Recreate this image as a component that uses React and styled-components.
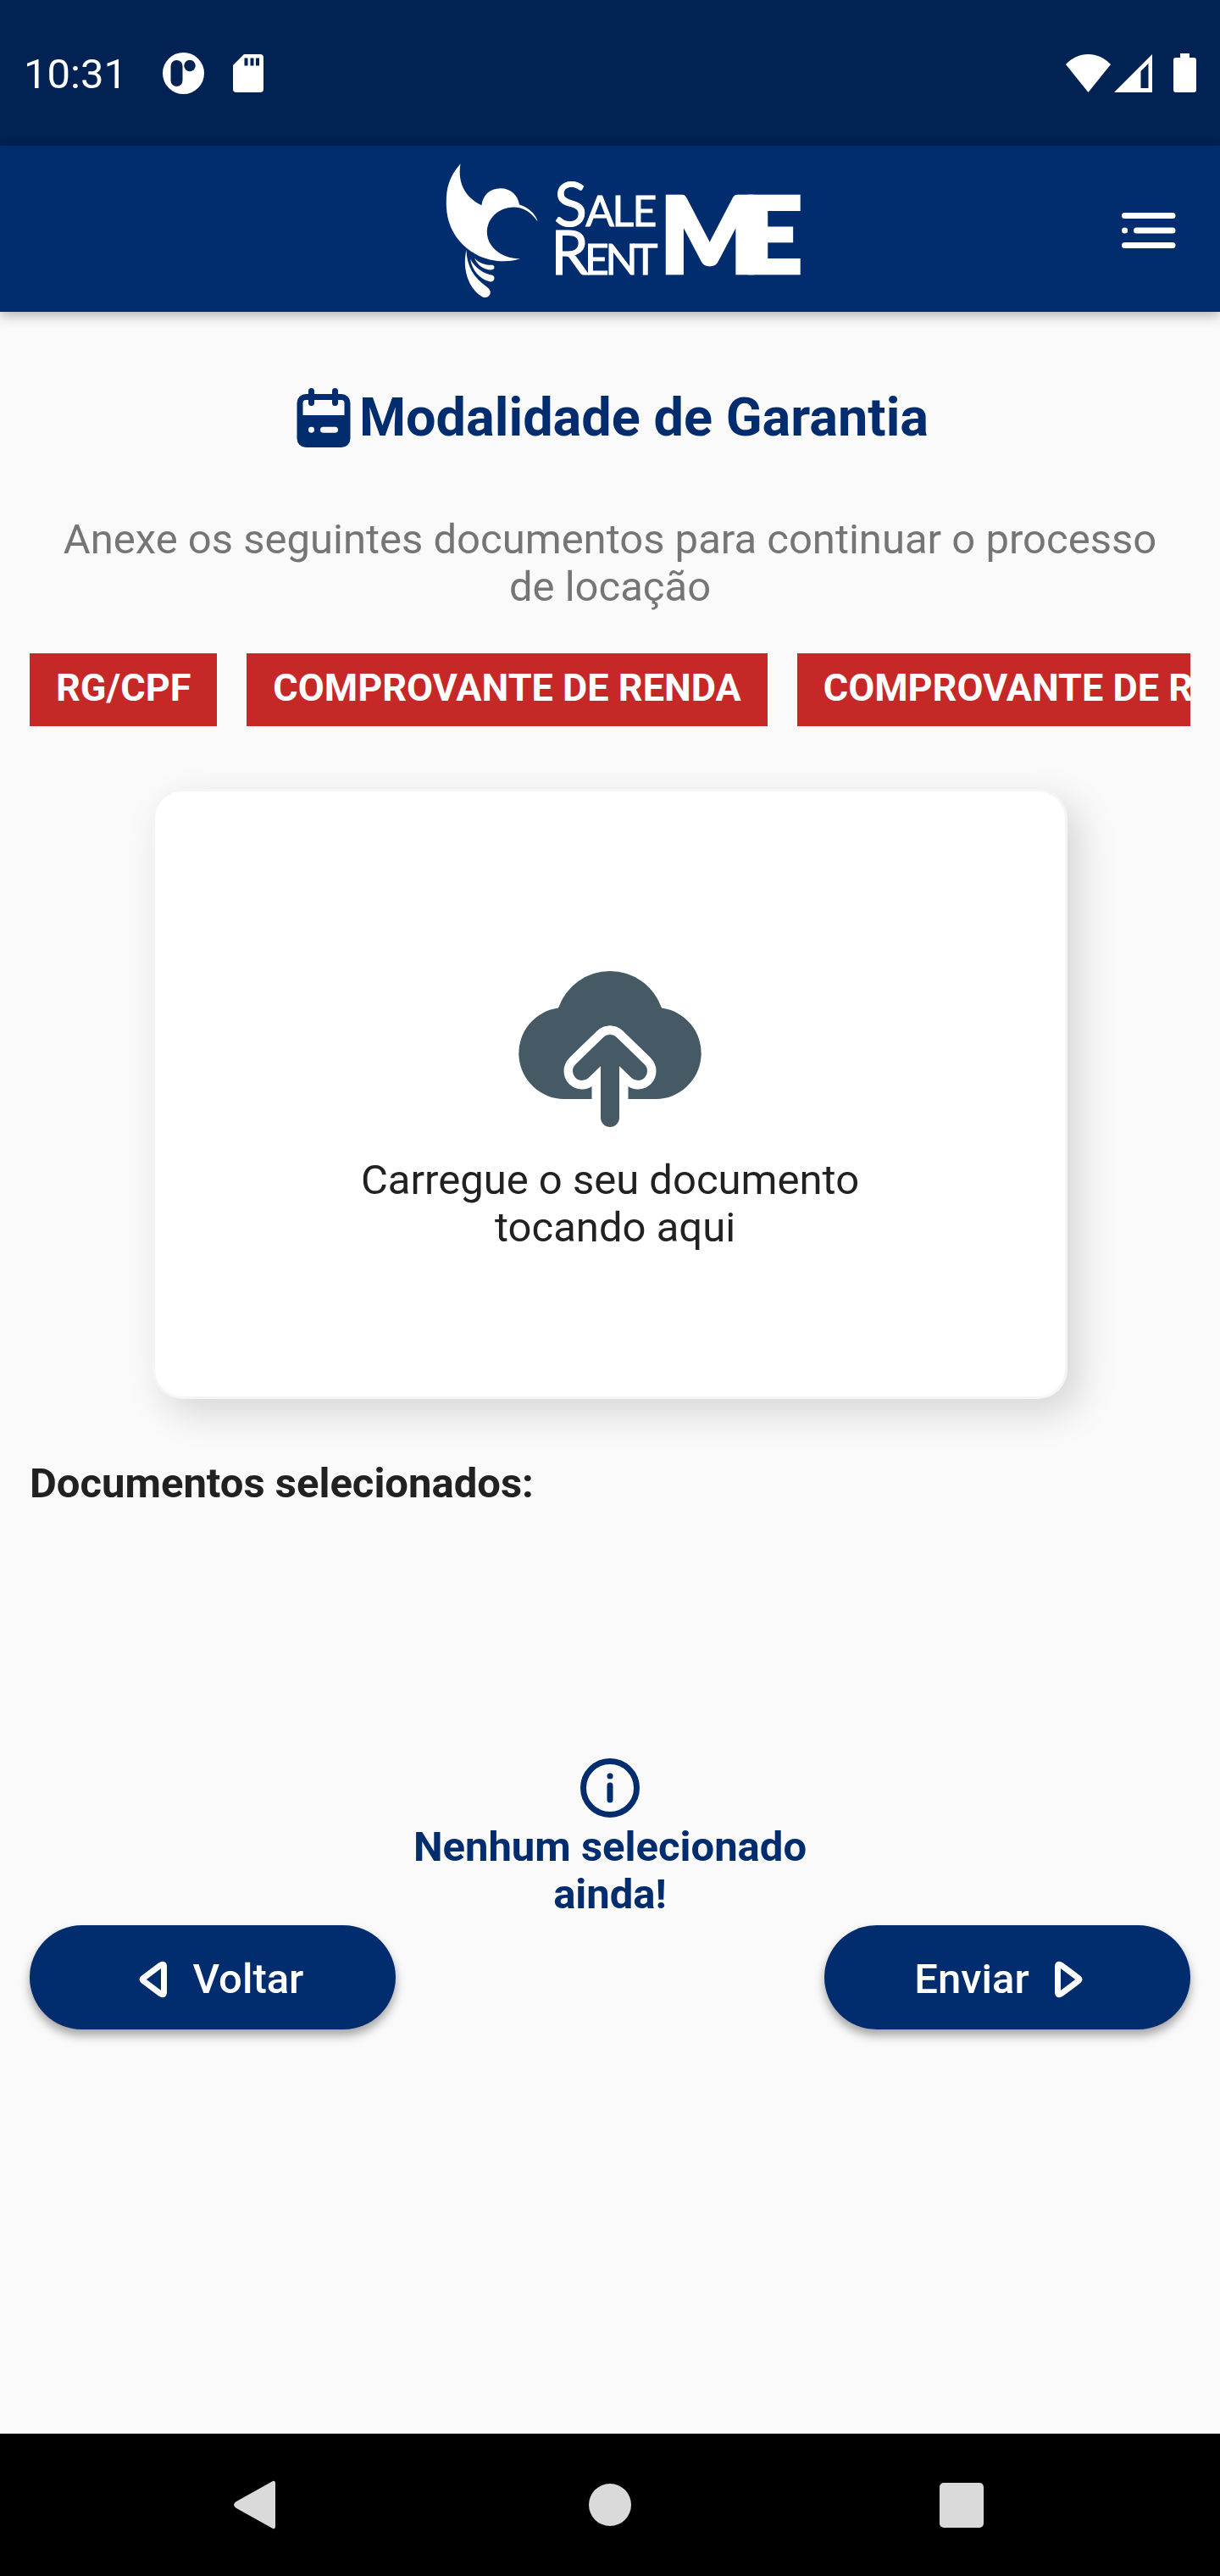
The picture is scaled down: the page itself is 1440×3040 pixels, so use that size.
import React from "react";
import styled, { createGlobalStyle } from "styled-components";

const navy = "#012d6f";

const GlobalStyle = createGlobalStyle`
  * { box-sizing: border-box; }
  body { margin: 0; background: #fafafa; }
  button { font: inherit; border: 0; padding: 0; background: none; cursor: pointer; }
  svg { display: block; flex: none; }
`;

const Screen = styled.div`
  display: flex;
  flex-direction: column;
  min-height: 100vh;
  font-family: Roboto, "Liberation Sans", sans-serif;
  font-size: 49px;
  line-height: 56px;
  color: #212121;
`;

const StatusBar = styled.div`
  display: flex;
  align-items: center;
  justify-content: space-between;
  height: 172px;
  padding: 0 28px;
  background: #012252;
  color: #fff;
`;

const StatusGroup = styled.div`
  display: flex;
  align-items: center;
  gap: ${(p) => p.$gap}px;
`;

const Clock = styled.time`
  margin-right: 8px;
  padding-top: 4px;
`;

const Header = styled.header`
  display: grid;
  grid-template-columns: 84px 1fr 84px;
  align-items: center;
  justify-items: center;
  height: 196px;
  padding: 0 42px;
  background: ${navy};
  box-shadow: 0 4px 14px rgba(0, 0, 0, 0.3);
`;

const MenuButton = styled.button`
  grid-column: 3;
`;

const Logo = styled.svg`
  grid-column: 2;
  fill: #fff;
  font-family: Lato, sans-serif;
`;

const Main = styled.main`
  flex: 1;
  display: flex;
  flex-direction: column;
  padding: 86px 35px;
`;

const Title = styled.h1`
  display: flex;
  align-items: center;
  justify-content: center;
  margin: 0;
  font-size: 63px;
  line-height: 77px;
  font-weight: 700;
  color: ${navy};
`;

const Intro = styled.p`
  margin: 78px 35px 50px;
  text-align: center;
  color: #757575;
`;

const Chips = styled.ul`
  display: flex;
  gap: 35px;
  margin: 0;
  padding: 0;
  list-style: none;
  overflow-x: auto;
  scrollbar-width: none;
`;

const Chip = styled.li`
  flex: none;
  padding: 13px 31px 17px;
  background: #c62828;
  color: #fff;
  font-size: 45px;
  font-weight: 700;
  white-space: nowrap;
`;

const UploadCard = styled.button`
  display: flex;
  flex-direction: column;
  align-items: center;
  justify-content: center;
  gap: 35px;
  height: 720px;
  margin: 74px 145px 72px;
  padding-top: 40px;
  background: #fff;
  border: 3px solid #f5f5f5;
  border-radius: 35px;
  box-shadow: 14px 16px 45px rgba(0, 0, 0, 0.15);
  color: inherit;
  white-space: pre-wrap;
`;

const SectionTitle = styled.h2`
  margin: 0;
  font-size: 49px;
  line-height: 56px;
  font-weight: 700;
`;

const EmptyState = styled.div`
  display: flex;
  flex-direction: column;
  align-items: center;
  align-self: center;
  max-width: 504px;
  margin-top: 289px;
  text-align: center;
  font-weight: 700;
  color: ${navy};
`;

const Actions = styled.div`
  display: flex;
  justify-content: space-between;
  margin-top: 8px;
`;

const ActionButton = styled.button`
  display: flex;
  align-items: center;
  justify-content: center;
  gap: 28px;
  width: 432px;
  height: 123px;
  padding-top: 4px;
  border-radius: 62px;
  background: ${navy};
  color: #fff;
  font-weight: 500;
  box-shadow: 0 7px 12px rgba(0, 0, 0, 0.35);
`;

const SystemNav = styled.nav`
  display: flex;
  align-items: center;
  justify-content: space-between;
  height: 168px;
  padding: 0 259px;
  background: #000;
`;

const Glyph = ({ w, h, children, ...rest }) => (
  <svg width={w} height={h} viewBox={`0 0 ${w} ${h}`} aria-hidden="true" {...rest}>
    {children}
  </svg>
);

const BrandLogo = () => (
  <Logo width="453" height="163" viewBox="-20 55 1360 490" role="img" aria-label="Sale Rent Me">
    <path d="M128 68C82 120 76 165 78 222C82 300 125 358 185 390C235 417 300 420 340 404C320 406 292 400 272 388C240 368 222 342 222 308C224 256 268 222 318 222C352 222 378 240 402 273C394 244 366 222 337 213C331 178 305 155 270 155C232 155 207 180 203 215C148 190 116 138 128 68Z" />
    <path d="M178 402C195 422 220 428 241 427Q249 429 248 437Q246 444 236 444C208 444 186 424 178 402Z" />
    <path d="M163 406C180 438 210 458 240 463Q249 466 248 475Q246 487 232 486C196 478 168 444 163 406Z" />
    <path d="M149 374C150 430 174 472 222 505Q237 515 233 530Q226 546 208 541C160 516 132 446 149 374Z" />
    <g stroke="#fff" strokeWidth="3" fontSize="150">
      <text x="460 572 666 738" y="289"><tspan fontSize="216">S</tspan>ALE</text>
      <text x="448 568 642 740" y="460"><tspan fontSize="216">R</tspan>ENT</text>
    </g>
    <text x="835 1127" y="454" fontSize="372" fontWeight="900" stroke="#fff" strokeWidth="14">ME</text>
  </Logo>
);

const documents = ["RG/CPF", "COMPROVANTE DE RENDA", "COMPROVANTE DE RESIDÊNCIA"];

export default function App() {
  return (
    <Screen>
      <GlobalStyle />
      <StatusBar>
        <StatusGroup $gap={34}>
          <Clock>10:31</Clock>
          <Glyph w={49} h={49}>
            <circle cx="24.5" cy="24.5" r="24.5" fill="#fff" />
            <rect x="9.500" y="9" width="14" height="31" rx="7" fill="#012252" />
            <circle cx="32" cy="15.500" r="6.700" fill="#012252" />
          </Glyph>
          <Glyph w={36} h={45}>
            <path d="M13 0H32Q36 0 36 4V41Q36 45 32 45H4Q0 45 0 41V13Z" fill="#fff" />
            <path d="M13.500 4.500h4v9h-4zM20.500 4.500h4v9h-4zM27 4.500h4v9h-4z" fill="#012252" />
          </Glyph>
        </StatusGroup>
        <StatusGroup $gap={4}>
          <Glyph w={53} h={45}>
            <path d="M0 12C15-4 38-4 53 12L26.500 45Z" fill="#fff" />
          </Glyph>
          <Glyph w={66} h={45}>
            <path d="M45 0V45H0ZM40.500 11L31.500 20V40H40.500Z" fill="#fff" fillRule="evenodd" />
          </Glyph>
          <Glyph w={27} h={46}>
            <path d="M8 0H19V5H24Q27 5 27 8V43Q27 46 24 46H3Q0 46 0 43V8Q0 5 3 5H8Z" fill="#fff" />
          </Glyph>
        </StatusGroup>
      </StatusBar>

      <Header>
        <BrandLogo />
        <MenuButton aria-label="Menu">
          <Glyph w={84} h={84} stroke="#fff" strokeWidth="7" strokeLinecap="round">
            <path d="M13.500 26.500H70M13.500 44h.1M27.500 44H70M13.500 61.500H70" />
          </Glyph>
        </MenuButton>
      </Header>

      <Main>
        <Title>
          <Glyph w={80} h={77} viewBox="-3 0 80 77">
            <path
              fill={navy}
              fillRule="evenodd"
              d="M20.500 4a3.500 3.500 0 0 1 3.500 3.500V11H45V7.500a3.500 3.500 0 0 1 7 0V11H56A10.500 10.500 0 0 1 66.500 21.500V63.500A10.500 10.500 0 0 1 56 74H14A10.500 10.500 0 0 1 3.500 63.500V21.500A10.500 10.500 0 0 1 14 11H17V7.500A3.500 3.500 0 0 1 20.500 4ZM17 18H14A3.500 3.500 0 0 0 10.500 21.500V36H59.500V21.500A3.500 3.500 0 0 0 56 18H52V21.500a3.500 3.500 0 0 1-7 0V18H24V21.500a3.500 3.500 0 0 1-7 0ZM20.500 49.700a3.500 3.500 0 1 0 .01 7a3.500 3.500 0 1 0-.01-7ZM34.500 49.700a3.500 3.500 0 0 0 0 7H48.500a3.500 3.500 0 0 0 0-7Z"
            />
          </Glyph>
          Modalidade de Garantia
        </Title>

        <Intro>Anexe os seguintes documentos para continuar o processo de locação</Intro>

        <Chips>
          {documents.map((name) => (
            <Chip key={name}>{name}</Chip>
          ))}
        </Chips>

        <UploadCard>
          <Glyph w={216} h={185}>
            <path
              fill="#455a64"
              d="M54 152A54 54 0 0 1 47 44.500A64.500 64.500 0 0 1 169 44.500A54 54 0 0 1 162 152Z"
            />
            <g fill="none" strokeLinecap="round" strokeLinejoin="round">
              <path d="M75 119L108 87L141 119M108 87V190" stroke="#fff" strokeWidth="43" strokeLinecap="butt" />
              <path d="M75 119L108 87L141 119" stroke="#fff" strokeWidth="43" />
              <path d="M75 119L108 87L141 119M108 87V174" stroke="#455a64" strokeWidth="22" />
            </g>
          </Glyph>
          <span>{"Carregue o seu documento\n tocando aqui"}</span>
        </UploadCard>

        <SectionTitle>Documentos selecionados:</SectionTitle>

        <EmptyState>
          <Glyph w={84} h={84} fill="none" stroke={navy} strokeWidth="7" strokeLinecap="round">
            <circle cx="42" cy="42" r="31.500" />
            <path d="M42 39V56M42 28h.1" />
          </Glyph>
          <span>Nenhum selecionado ainda!</span>
        </EmptyState>

        <Actions>
          <ActionButton>
            <Glyph w={56} h={49} fill="none" stroke="#fff" strokeWidth="7" strokeLinejoin="round">
              <path d="M45 8.500Q49.500 5.500 49.500 10V40Q49.500 44.500 45 41.500L25 26.500Q23 25 25 23.500Z" />
            </Glyph>
            Voltar
          </ActionButton>
          <ActionButton>
            Enviar
            <Glyph w={56} h={49} fill="none" stroke="#fff" strokeWidth="7" strokeLinejoin="round">
              <path d="M10 8.500Q5.500 5.500 5.500 10V40Q5.500 44.500 10 41.500L30 26.500Q32 25 30 23.500Z" />
            </Glyph>
          </ActionButton>
        </Actions>
      </Main>

      <SystemNav>
        <button aria-label="Voltar">
          <Glyph w={84} h={84} fill="#dadada">
            <path d="M63 14Q66 13 66 17V67Q66 71 63 70L20 46Q14 42 20 38Z" />
          </Glyph>
        </button>
        <button aria-label="Início">
          <Glyph w={84} h={84} fill="#dadada">
            <circle cx="42" cy="42" r="25" />
          </Glyph>
        </button>
        <button aria-label="Recentes">
          <Glyph w={84} h={84} fill="#dadada">
            <rect x="12" y="16" width="52" height="53" rx="5" />
          </Glyph>
        </button>
      </SystemNav>
    </Screen>
  );
}
